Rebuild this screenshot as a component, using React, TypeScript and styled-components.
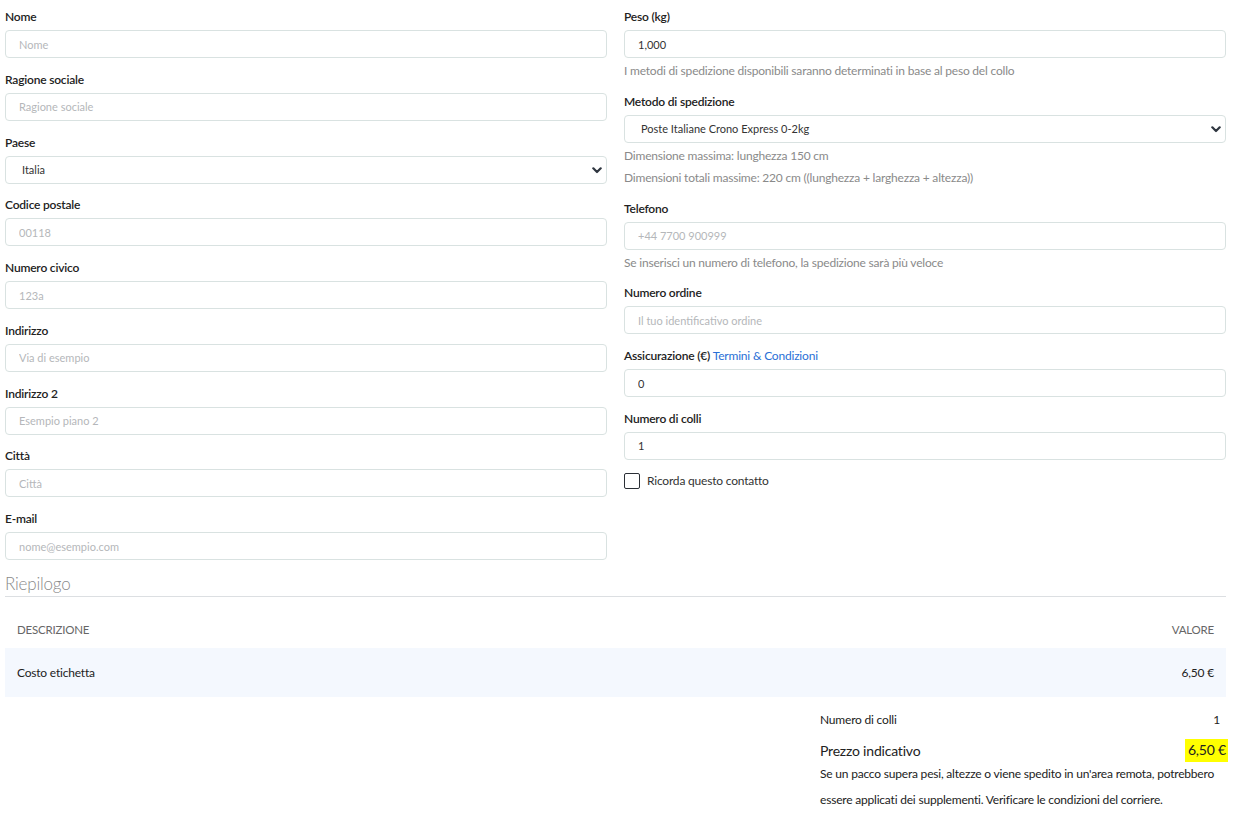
import styled, { createGlobalStyle } from 'styled-components';

type FieldDef = {
    label: string;
    placeholder?: string;
    value?: string;
    select?: boolean;
};

const leftFields: FieldDef[] = [
    { label: 'Nome', placeholder: 'Nome' },
    { label: 'Ragione sociale', placeholder: 'Ragione sociale' },
    { label: 'Paese', value: 'Italia', select: true },
    { label: 'Codice postale', placeholder: '00118' },
    { label: 'Numero civico', placeholder: '123a' },
    { label: 'Indirizzo', placeholder: 'Via di esempio' },
    { label: 'Indirizzo 2', placeholder: 'Esempio piano 2' },
    { label: 'Città', placeholder: 'Città' },
    { label: 'E-mail', placeholder: 'nome@esempio.com' },
];

const GlobalStyle = createGlobalStyle`
    body {
        margin: 0;
        background: #fff;
        font-family: Lato, "Noto Sans", "Liberation Sans", sans-serif;
        letter-spacing: -0.2px;
        color: #222;
    }
`;

const Chevron = () => (
    <ChevronIcon width="10" height="7" viewBox="0 0 10 7">
        <path d="M1.3 1.3 L5 5 L8.7 1.3" fill="none" stroke="#2f3640" strokeWidth="2.2" strokeLinecap="round" strokeLinejoin="round" />
    </ChevronIcon>
);

const TextField = ({ label, placeholder, value, select }: FieldDef) => (
    <Field>
        <Label>{label}</Label>
        {select ? (
            <SelectWrap>
                <Select defaultValue={value}>
                    <option>{value}</option>
                </Select>
                <Chevron />
            </SelectWrap>
        ) : (
            <Input placeholder={placeholder} defaultValue={value} />
        )}
    </Field>
);

export default function App() {
    return (
        <Page>
            <GlobalStyle />
            <FormGrid>
                <Column>
                    {leftFields.map((f) => (
                        <TextField key={f.label} {...f} />
                    ))}
                </Column>
                <Column>
                    <Field>
                        <Label>Peso (kg)</Label>
                        <Input defaultValue="1,000" />
                        <Help>I metodi di spedizione disponibili saranno determinati in base al peso del collo</Help>
                    </Field>
                    <Field>
                        <Label>Metodo di spedizione</Label>
                        <SelectWrap>
                            <Select defaultValue="poste">
                                <option value="poste">Poste Italiane Crono Express 0-2kg</option>
                            </Select>
                            <Chevron />
                        </SelectWrap>
                        <Help>Dimensione massima: lunghezza 150 cm</Help>
                        <Help>Dimensioni totali massime: 220 cm ((lunghezza + larghezza + altezza))</Help>
                    </Field>
                    <Field>
                        <Label>Telefono</Label>
                        <Input placeholder="+44 7700 900999" />
                        <Help>Se inserisci un numero di telefono, la spedizione sarà più veloce</Help>
                    </Field>
                    <Field>
                        <Label>Numero ordine</Label>
                        <Input placeholder="Il tuo identificativo ordine" />
                    </Field>
                    <Field>
                        <Label>
                            Assicurazione (€) <Link href="#">Termini &amp; Condizioni</Link>
                        </Label>
                        <Input defaultValue="0" />
                    </Field>
                    <Field>
                        <Label>Numero di colli</Label>
                        <Input defaultValue="1" />
                    </Field>
                    <CheckRow>
                        <CheckBox />
                        <span>Ricorda questo contatto</span>
                    </CheckRow>
                </Column>
            </FormGrid>

            <SectionTitle>Riepilogo</SectionTitle>
            <Table>
                <thead>
                    <tr>
                        <Th>Descrizione</Th>
                        <Th $right>Valore</Th>
                    </tr>
                </thead>
                <tbody>
                    <Tr>
                        <Td>Costo etichetta</Td>
                        <Td $right>6,50 €</Td>
                    </Tr>
                </tbody>
            </Table>

            <Summary>
                <SummaryRow>
                    <span>Numero di colli</span>
                    <span>1</span>
                </SummaryRow>
                <TotalRow>
                    <span>Prezzo indicativo</span>
                    <Highlight>6,50 €</Highlight>
                </TotalRow>
                <Note>
                    Se un pacco supera pesi, altezze o viene spedito in un'area remota, potrebbero essere applicati dei supplementi. Verificare le condizioni del corriere.
                </Note>
            </Summary>
        </Page>
    );
}

const Page = styled.div`
    padding: 0 14px 10px 5px;
    box-sizing: border-box;
    width: 1240px;
`;

const FormGrid = styled.div`
    display: grid;
    grid-template-columns: 1fr 1fr;
    column-gap: 17px;
`;

const Column = styled.div`
    display: flex;
    flex-direction: column;
    gap: 12.75px;
    padding-top: 8px;
`;

const Field = styled.div`
    display: flex;
    flex-direction: column;
`;

const Label = styled.label`
    font-size: 12px;
    line-height: 18px;
    font-weight: 600;
    color: #222;
    margin-bottom: 4px;
`;

const Link = styled.a`
    color: #2a6fd6;
    font-weight: 400;
    text-decoration: none;
`;

const Input = styled.input`
    box-sizing: border-box;
    height: 28px;
    width: 100%;
    border: 1px solid #d9e2e1;
    border-radius: 4px;
    padding: 0 13px;
    font-family: inherit;
    font-size: 11px;
    color: #333;
    outline: none;

    &::placeholder {
        color: #b5b7ba;
    }
`;

const SelectWrap = styled.div`
    position: relative;
`;

const Select = styled.select`
    appearance: none;
    box-sizing: border-box;
    height: 28px;
    width: 100%;
    border: 1px solid #d9e2e1;
    border-radius: 4px;
    padding: 0 14px 0 16px;
    background: #fff;
    font-family: inherit;
    font-size: 11px;
    color: #333;
    outline: none;
`;

const ChevronIcon = styled.svg`
    position: absolute;
    right: 5px;
    top: 11px;
    pointer-events: none;
`;

const Help = styled.div`
    margin-top: 4px;
    font-size: 12px;
    line-height: 18px;
    color: #8a8a8a;
`;

const CheckRow = styled.label`
    display: flex;
    align-items: center;
    gap: 7px;
    font-size: 12px;
    line-height: 16px;
    color: #333;
`;

const CheckBox = styled.span`
    box-sizing: border-box;
    width: 16px;
    height: 16px;
    border: 1.5px solid #2b2f36;
    border-radius: 2px;
`;

const SectionTitle = styled.h3`
    margin: 12px 0 0;
    font-size: 17px;
    line-height: 24px;
    font-weight: 300;
    color: #8a8a8a;
    border-bottom: 1px solid #dcdfe2;
`;

const Table = styled.table`
    width: 100%;
    margin-top: 14px;
    border-collapse: collapse;
    font-size: 12px;
`;

const Th = styled.th<{ $right?: boolean }>`
    padding: 10px 12px;
    line-height: 17px;
    text-align: ${(p) => (p.$right ? 'right' : 'left')};
    font-weight: 400;
    text-transform: uppercase;
    color: #666;
    font-size: 11.5px;
`;

const Tr = styled.tr`
    background: #f4f8fe;
`;

const Td = styled.td<{ $right?: boolean }>`
    padding: 16px 12px;
    line-height: 17px;
    text-align: ${(p) => (p.$right ? 'right' : 'left')};
    color: #222;
`;

const Summary = styled.div`
    width: 406px;
    margin: 14px 0 0 auto;
`;

const SummaryRow = styled.div`
    display: flex;
    justify-content: space-between;
    font-size: 12px;
    line-height: 18px;
    padding-right: 6px;
    color: #222;
`;

const TotalRow = styled.div`
    display: flex;
    justify-content: space-between;
    align-items: center;
    margin-top: 10px;
    font-size: 14px;
    line-height: 20px;
    color: #222;
`;

const Highlight = styled.span`
    background: #ffff00;
    padding: 1px 2px 2px 3px;
    margin-right: -2px;
`;

const Note = styled.p`
    margin: -1px 0 0;
    font-size: 12px;
    line-height: 26px;
    color: #222;
`;
